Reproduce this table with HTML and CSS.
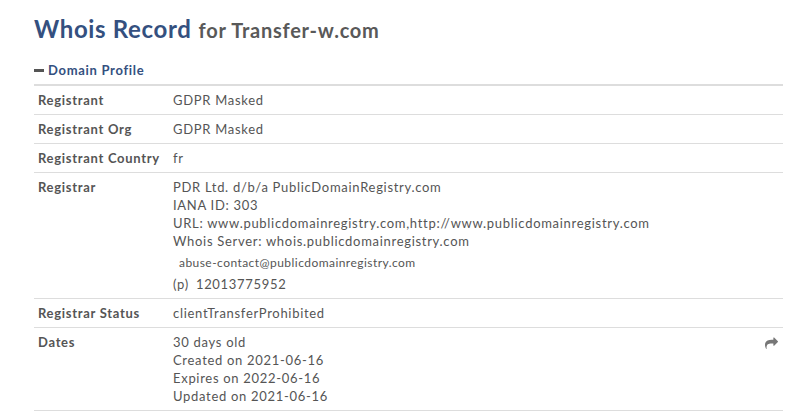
FILE: index.html
```html
<!DOCTYPE html>
<html>
<head>
<meta charset="utf-8">
<link rel="stylesheet" href="styles.css">
</head>
<body>
<div class="page">
  <h1 class="title"><span class="title-main">Whois Record</span> <span class="title-sub">for Transfer-w.com</span></h1>
  <div class="section-head"><span class="minus"></span><span>Domain Profile</span></div>
  <div class="profile">
    <div class="row">
      <div class="label">Registrant</div>
      <div class="value">GDPR Masked</div>
    </div>
    <div class="row">
      <div class="label">Registrant Org</div>
      <div class="value">GDPR Masked</div>
    </div>
    <div class="row">
      <div class="label">Registrant Country</div>
      <div class="value">fr</div>
    </div>
    <div class="row">
      <div class="label">Registrar</div>
      <div class="value">
        <div>PDR Ltd. d/b/a PublicDomainRegistry.com</div>
        <div>IANA ID: 303</div>
        <div>URL: www.publicdomainregistry.com,http://www.publicdomainregistry.com</div>
        <div>Whois Server: whois.publicdomainregistry.com</div>
        <div class="abuse">abuse-contact@publicdomainregistry.com</div>
        <div class="phone"><span class="p">(p)</span> 12013775952</div>
      </div>
    </div>
    <div class="row">
      <div class="label">Registrar Status</div>
      <div class="value">clientTransferProhibited</div>
    </div>
    <div class="row">
      <div class="label">Dates</div>
      <div class="value">
        <div>30 days old</div>
        <div>Created on 2021-06-16</div>
        <div>Expires on 2022-06-16</div>
        <div>Updated on 2021-06-16</div>
      </div>
      <svg class="share" viewBox="0 0 1792 1792" width="13" height="13"><path d="M1792 640q0 26-19 45l-512 512q-19 19-45 19t-45-19-19-45v-256h-224q-98 0-175.5 6t-154 21.5-133 42.5-105.5 69.5-80 101-48.5 138.5-17.5 181q0 55 5 123 0 6 2.5 23.5t2.5 26.5q0 15-8.5 25t-23.5 10q-16 0-28-17-7-9-13-22t-13.5-30-10.5-24q-127-285-127-451 0-199 53-333 162-403 875-403h224v-256q0-26 19-45t45-19 45 19l512 512q19 19 19 45z"/></svg>
    </div>
  </div>
</div>
</body>
</html>
```
FILE: styles.css
```css
html, body {
  margin: 0;
  padding: 0;
  background: #fff;
}
body {
  font-family: Lato, "Open Sans", sans-serif;
  color: #555;
  font-size: 13px;
  letter-spacing: 0.7px;
}
.page {
  width: 749px;
  padding: 12px 0 0 34px;
}
.title {
  margin: 0;
  line-height: 32px;
  font-weight: 700;
  white-space: nowrap;
}
.title-main {
  font-size: 24px;
  color: #34507f;
  letter-spacing: 0.65px;
}
.title-sub {
  font-size: 20px;
  color: #595959;
  letter-spacing: 0.75px;
}
.section-head {
  display: flex;
  align-items: center;
  gap: 4px;
  margin-top: 13px;
  height: 22px;
  color: #34507f;
  font-weight: 700;
  font-size: 13px;
  padding-bottom: 3px;
  border-bottom: 2px solid #ddd;
}
.minus {
  width: 10px;
  height: 3px;
  background: #555;
}
.row {
  display: flex;
  position: relative;
  padding: 5px 0;
  border-bottom: 1px solid #ddd;
  line-height: 18px;
}
.label {
  width: 139px;
  flex: none;
  padding-left: 4px;
  box-sizing: border-box;
  font-weight: 700;
}
.value {
  flex: 1;
}
.abuse {
  font-size: 12px;
  letter-spacing: 0.45px;
  padding-left: 6px;
  margin-top: 4px;
  line-height: 18px;
}
.phone {
  margin-top: 3px;
  line-height: 18px;
}
.p {
  margin-right: 3px;
}
.share {
  position: absolute;
  right: 5px;
  top: 9px;
  fill: #777;
}
```
